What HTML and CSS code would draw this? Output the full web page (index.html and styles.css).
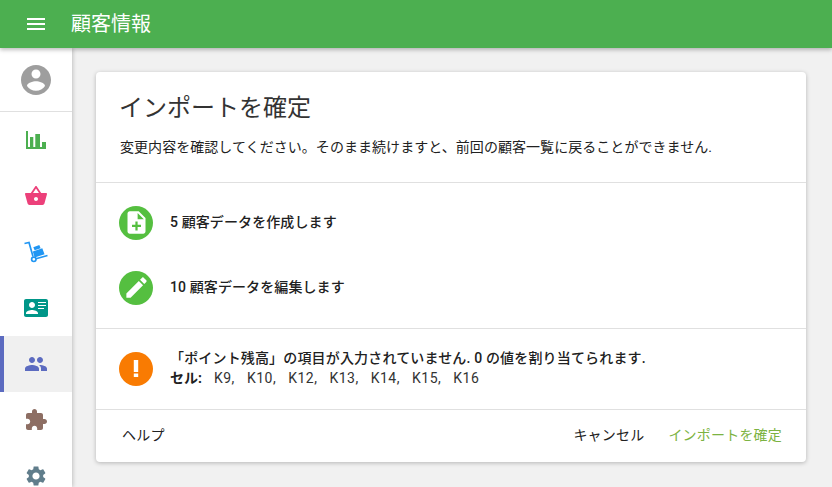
FILE: index.html
```html
<!DOCTYPE html>
<html lang="ja">
<head>
<meta charset="utf-8">
<title>顧客情報</title>
<link rel="stylesheet" href="styles.css">
</head>
<body>
<header class="appbar">
  <svg class="menu-icon" viewBox="0 0 24 24"><path d="M3 18h18v-2H3v2zm0-5h18v-2H3v2zm0-7v2h18V6H3z"/></svg>
  <h1 class="app-title">顧客情報</h1>
</header>
<div class="body-row">
  <nav class="sidebar">
    <div class="nav-account">
      <svg class="icon-account" viewBox="0 0 24 24"><path d="M12 2C6.48 2 2 6.48 2 12s4.48 10 10 10 10-4.48 10-10S17.52 2 12 2zm0 3c1.66 0 3 1.34 3 3s-1.34 3-3 3-3-1.34-3-3 1.34-3 3-3zm0 14.2c-2.5 0-4.71-1.28-6-3.22.03-1.99 4-3.08 6-3.08 1.99 0 5.97 1.09 6 3.08-1.29 1.94-3.5 3.22-6 3.22z"/></svg>
    </div>
    <div class="nav-item"><svg class="nav-icon c-green" viewBox="0 0 24 24"><path d="M2 3h2v16h18v2H2zM6 9h3.300v10H6zM11.300 6H16v13h-4.700zM18 14h4v5h-4z"/></svg></div>
    <div class="nav-item"><svg class="nav-icon c-pink" viewBox="0 0 24 24"><path d="M17.21 9l-4.38-6.56c-.19-.28-.51-.42-.83-.42-.32 0-.64.14-.83.43L6.790 9H2c-.55 0-1 .45-1 1 0 .09.01.18.04.27l2.540 9.270c.23.84 1 1.460 1.920 1.460h13c.92 0 1.690-.62 1.930-1.460l2.540-9.270L23 10c0-.55-.45-1-1-1h-4.790zM9 9l3-4.400L15 9H9zm3 8c-1.100 0-2-.9-2-2s.9-2 2-2 2 .9 2 2-.9 2-2 2z"/></svg></div>
    <div class="nav-item"><svg class="nav-icon c-blue" viewBox="0 0 24 24"><path class="cart-line" d="M.500 3.500L5 2.500l4 14M12 18.800l11.500-3.300"/><circle class="cart-line" cx="9.800" cy="19.300" r="2.200"/><path d="M9.300 7.200l6-2.200 1.300 3.200-6 2.100zM8.800 11.500l9.500-3.200 2.200 6-9.800 3.200z"/></svg></div>
    <div class="nav-item"><svg class="nav-icon c-teal" viewBox="0 0 24 24"><path d="M2 3h20c1.100 0 2 .9 2 2v14c0 1.100-.9 2-2 2H2c-1.100 0-2-.9-2-2V5c0-1.100.9-2 2-2zm6 3c-1.660 0-3 1.340-3 3s1.340 3 3 3 3-1.340 3-3-1.340-3-3-3zm-6 12h12v-1c0-2-4-3.100-6-3.100S2 15 2 17v1zM14 6v1h8V6h-8zm0 3v1h8V9h-8zm0 3v1h6v-1h-6z"/></svg></div>
    <div class="nav-item is-active"><svg class="nav-icon c-indigo" viewBox="0 0 24 24"><path d="M16 11c1.660 0 2.990-1.340 2.990-3S17.660 5 16 5c-1.660 0-3 1.340-3 3s1.340 3 3 3zm-8 0c1.660 0 2.990-1.340 2.990-3S9.660 5 8 5C6.340 5 5 6.340 5 8s1.340 3 3 3zm0 2c-2.330 0-7 1.170-7 3.500V19h14v-2.500c0-2.330-4.670-3.500-7-3.500zm8 0c-.29 0-.62.02-.97.05 1.160.84 1.970 1.970 1.970 3.450V19h6v-2.500c0-2.330-4.670-3.500-7-3.500z"/></svg></div>
    <div class="nav-item"><svg class="nav-icon c-brown" viewBox="0 0 24 24"><path d="M20.500 11H19V7c0-1.100-.9-2-2-2h-4V3.500C13 2.120 11.880 1 10.500 1S8 2.120 8 3.500V5H4c-1.100 0-1.990.9-1.990 2v3.800H3.500c1.490 0 2.700 1.210 2.700 2.700s-1.210 2.700-2.700 2.700H2V20c0 1.100.9 2 2 2h3.800v-1.500c0-1.490 1.210-2.700 2.700-2.700 1.490 0 2.700 1.210 2.700 2.700V22H17c1.100 0 2-.9 2-2v-4h1.500c1.380 0 2.500-1.120 2.500-2.500S21.880 11 20.500 11z"/></svg></div>
    <div class="nav-item"><svg class="nav-icon c-slate" viewBox="0 0 24 24"><path d="M19.140 12.940c.04-.3.06-.61.06-.94 0-.32-.02-.64-.07-.94l2.030-1.580c.18-.14.23-.41.12-.61l-1.920-3.320c-.12-.22-.37-.29-.59-.22l-2.390.96c-.5-.38-1.030-.7-1.620-.94l-.36-2.540c-.04-.24-.24-.41-.48-.41h-3.840c-.24 0-.43.17-.47.41l-.36 2.540c-.59.24-1.130.57-1.620.94l-2.390-.96c-.22-.08-.47 0-.59.22L2.740 8.870c-.12.21-.08.47.12.61l2.030 1.580c-.05.3-.09.63-.09.94s.02.64.07.94l-2.030 1.580c-.18.14-.23.41-.12.61l1.920 3.320c.12.22.37.29.59.22l2.390-.96c.5.38 1.030.7 1.620.94l.36 2.540c.05.24.24.41.48.41h3.840c.24 0 .44-.17.47-.41l.36-2.540c.59-.24 1.130-.56 1.620-.94l2.390.96c.22.08.47 0 .59-.22l1.920-3.320c.12-.22.07-.47-.12-.61l-2.010-1.580zM12 15.600c-1.980 0-3.600-1.620-3.600-3.600s1.620-3.600 3.600-3.600 3.600 1.620 3.600 3.600-1.620 3.600-3.600 3.600z"/></svg></div>
  </nav>
  <main class="content">
    <section class="card">
      <div class="card-head">
        <h2 class="card-title">インポートを確定</h2>
        <p class="card-sub">変更内容を確認してください。そのまま続けますと、前回の顧客一覧に戻ることができません.</p>
      </div>
      <div class="summary">
        <div class="row">
          <span class="badge badge-green"><svg viewBox="0 0 24 24"><path d="M14 2H6c-1.100 0-1.990.9-1.990 2L4 20c0 1.100.89 2 1.990 2H18c1.100 0 2-.9 2-2V8l-6-6zm2 14h-3v3h-2v-3H8v-2h3v-3h2v3h3v2zm-3-7V3.500L18.500 9H13z"/></svg></span>
          <span class="row-text">5 顧客データを作成します</span>
        </div>
        <div class="row">
          <span class="badge badge-green"><svg viewBox="0 0 24 24"><path d="M3 17.250V21h3.750L17.810 9.940l-3.750-3.750L3 17.250zM20.710 7.040c.39-.39.39-1.020 0-1.410l-2.340-2.340c-.39-.39-1.020-.39-1.410 0l-1.830 1.830 3.750 3.750 1.830-1.830z"/></svg></span>
          <span class="row-text">10 顧客データを編集します</span>
        </div>
      </div>
      <div class="warning">
        <span class="badge badge-orange"><svg class="alert-mark" viewBox="0 0 34 34"><path d="M14.800 8h4.400v12h-4.400zM14.800 21.500h4.400V25h-4.400z"/></svg></span>
        <div class="warning-text">
          <div class="row-text warning-line">「ポイント残高」の項目が入力されていません. 0 の値を割り当てられます.</div>
          <div class="cells"><b>セル:</b><span>K9,</span><span>K10,</span><span>K12,</span><span>K13,</span><span>K14,</span><span>K15,</span><span>K16</span></div>
        </div>
      </div>
      <div class="actions">
        <span class="btn">ヘルプ</span>
        <span class="spacer"></span>
        <span class="btn">キャンセル</span>
        <span class="btn btn-primary">インポートを確定</span>
      </div>
    </section>
  </main>
</div>
</body>
</html>
```
FILE: styles.css
```css
* { box-sizing: border-box; }
html, body { margin: 0; height: 100%; overflow: hidden; }
body {
  background: #f1f1f1;
  color: #212121;
  font-family: "Roboto", "Noto Sans CJK JP", sans-serif;
  font-size: 14px;
}
.appbar {
  height: 48px;
  background: #4caf50;
  color: #fff;
  display: flex;
  align-items: center;
  padding-left: 24px;
  box-shadow: 0 2px 4px rgba(0,0,0,.25);
  position: relative;
  z-index: 2;
}
.menu-icon { width: 24px; height: 24px; fill: #fff; }
.app-title { margin: 0 0 0 23px; font-size: 20px; font-weight: 400; line-height: 47px; }
.body-row { display: flex; height: 439px; }
.sidebar {
  width: 72px;
  flex: none;
  background: #fff;
  box-shadow: 1px 0 4px rgba(0,0,0,.2);
  overflow: hidden;
  position: relative;
  z-index: 1;
}
.nav-account {
  height: 64px;
  border-bottom: 1px solid #e0e0e0;
  display: flex;
  align-items: center;
  justify-content: center;
}
.icon-account { width: 36px; height: 36px; fill: #9e9e9e; }
.nav-item {
  height: 56px;
  display: flex;
  align-items: center;
  justify-content: center;
}
.nav-icon { width: 24px; height: 24px; }
.cart-line { fill: none; stroke: #2196f3; stroke-width: 1.700; }
.is-active { background: #f0f0f0; border-left: 4px solid #5c6bc0; padding-right: 4px; }
.c-green { fill: #4caf50; }
.c-pink { fill: #ec407a; }
.c-blue { fill: #2196f3; }
.c-teal { fill: #009688; }
.c-indigo { fill: #5c6bc0; }
.c-brown { fill: #8d6e63; }
.c-slate { fill: #607d8b; }
.content { flex: 1; padding: 24px 26px 0 24px; }
.card {
  height: 390px;
  background: #fff;
  border-radius: 4px;
  box-shadow: 0 1px 4px rgba(0,0,0,.25);
  display: flex;
  flex-direction: column;
}
.card-head { height: 111px; padding: 21px 24px 0; border-bottom: 1px solid #e0e0e0; }
.card-title { margin: 0; font-size: 24px; font-weight: 400; line-height: 30px; color: #333; margin-left: -1px; }
.card-sub { margin: 14px 0 0; font-size: 14px; line-height: 20px; letter-spacing: .05px; }
.summary { height: 146px; padding-top: 7px; border-bottom: 1px solid #e0e0e0; }
.row { height: 65px; display: flex; align-items: center; padding-left: 23px; }
.row > .row-text { padding-bottom: 4px; }
.badge {
  width: 34px;
  height: 34px;
  border-radius: 50%;
  flex: none;
  display: flex;
  align-items: center;
  justify-content: center;
  color: #fff;
}
.badge svg { width: 27px; height: 27px; fill: #fff; }
.badge .alert-mark { width: 34px; height: 34px; }
.badge-green { background: #55bf40; }
.badge-orange { background: #f97b02; }
.row-text { margin-left: 17px; font-size: 14px; font-weight: 500; letter-spacing: .1px; }
.warning-line { letter-spacing: .16px; }
.warning { height: 81px; display: flex; align-items: center; padding: 0 23px 1px; border-bottom: 1px solid #e0e0e0; }
.warning-text { display: flex; flex-direction: column; line-height: 20px; padding-bottom: 2px; }
.cells { margin-left: 17px; display: flex; gap: 12px; color: #333; letter-spacing: .5px; }
.cells b { font-weight: 700; color: #212121; letter-spacing: 0; }
.actions { flex: 1; display: flex; align-items: center; padding: 0 24px 4px 26px; }
.spacer { flex: 1; }
.btn { font-size: 14px; letter-spacing: .2px; }
.btn-primary { margin-left: 24px; color: #7cb342; }
```
